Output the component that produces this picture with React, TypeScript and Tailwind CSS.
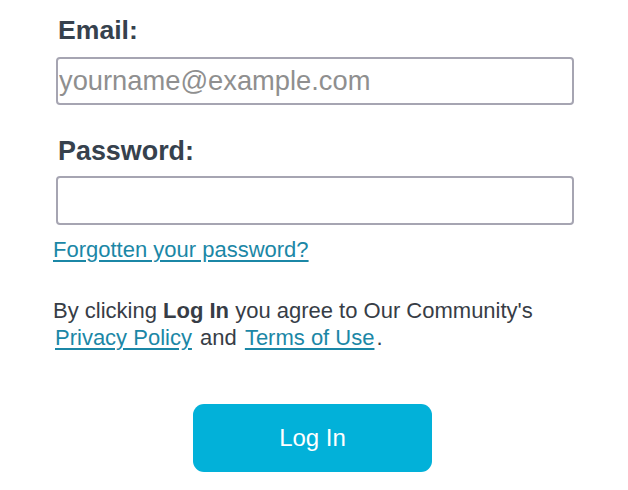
import React from "react";

export default function App() {
  return (
    <div className="w-[628px] h-[490px] bg-white overflow-hidden" style={{ fontFamily: '"Liberation Sans", Arial, Helvetica, sans-serif' }}>
      <div className="flex flex-col pl-[53px] pr-[54px] pt-[15px]">
        <label className="ml-[5px] text-[26.6px] leading-[30px] font-bold text-[#36414d]">Email:</label>
        <input
          type="email"
          placeholder="yourname@example.com"
          className="ml-[3px] mt-[12px] h-[48px] w-[518px] rounded-[4px] border-2 border-[#a6a5b2] bg-white pl-[1px] text-[27.3px] text-[#333] placeholder:text-[#8f8f8f] outline-none"
        />
        <label className="ml-[5px] mt-[31px] text-[26.9px] leading-[30px] font-bold text-[#36414d]">Password:</label>
        <input
          type="password"
          className="ml-[3px] mt-[10px] h-[49px] w-[518px] rounded-[4px] border-2 border-[#a6a5b2] bg-white outline-none"
        />
        <a href="#" className="mt-[12px] self-start text-[22px] leading-[26px] text-[#1b87a6] underline underline-offset-[3px]">
          Forgotten your password?
        </a>
        <p className="mt-[34px] text-[22px] leading-[27px] text-[#373d46]">
          By clicking <span className="font-bold">Log In</span> you agree to Our Community's
          <br />
          <a href="#" className="mx-[2px] text-[#1b87a6] underline underline-offset-[3px]">Privacy Policy</a> and{" "}
          <a href="#" className="mx-[2px] text-[#1b87a6] underline underline-offset-[3px]">Terms of Use</a>.
        </p>
        <div className="flex justify-center mt-[53px] pr-[2px]">
          <button className="h-[68px] w-[239px] rounded-[11px] bg-[#02b1d9] text-[24px] text-white">Log In</button>
        </div>
      </div>
    </div>
  );
}
